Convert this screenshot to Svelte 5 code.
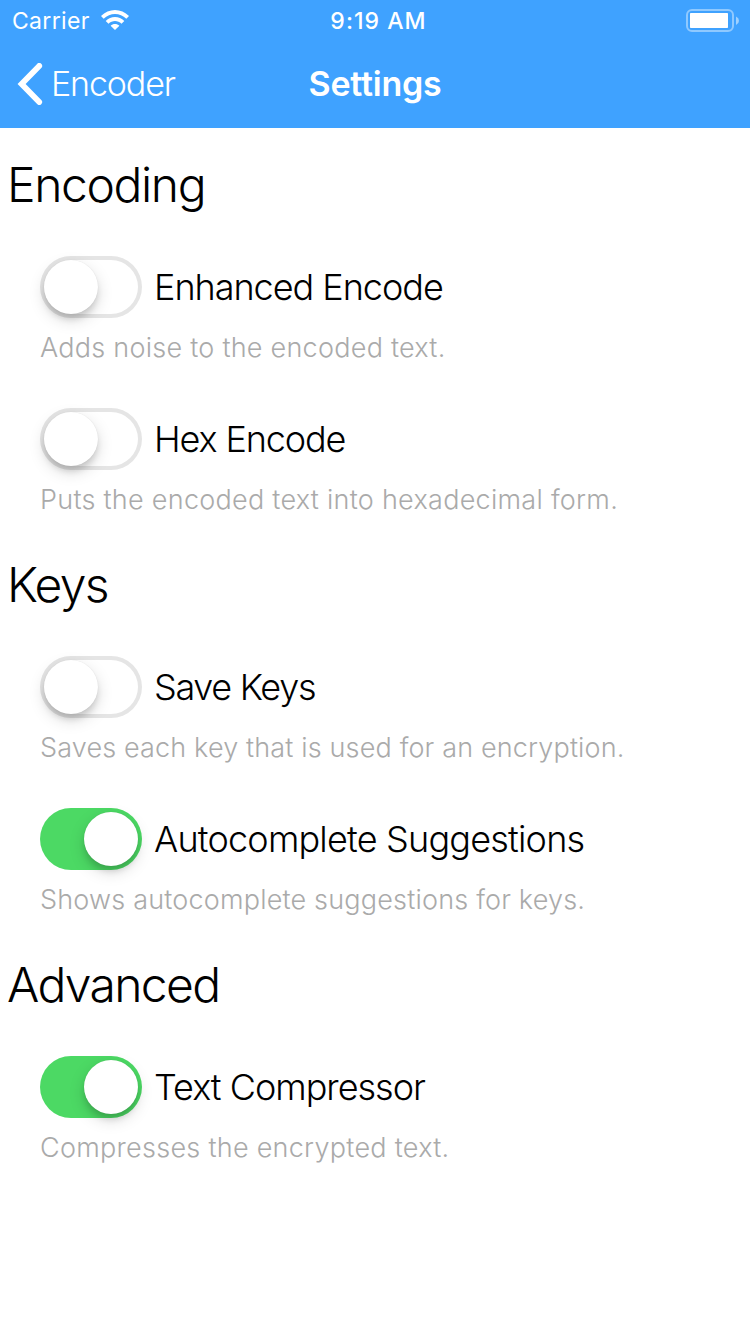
<script>
  let sections = $state([
    { title: 'Encoding', tracking: -1.4, items: [
      { label: 'Enhanced Encode', tracking: -1.03, note: 'Adds noise to the encoded text.', noteTracking: 0.25, on: false },
      { label: 'Hex Encode', tracking: -1.12, note: 'Puts the encoded text into hexadecimal form.', noteTracking: 0.27, on: false }
    ] },
    { title: 'Keys', tracking: -1.7, items: [
      { label: 'Save Keys', tracking: -1.3, note: 'Saves each key that is used for an encryption.', noteTracking: 0.15, on: false },
      { label: 'Autocomplete Suggestions', tracking: -0.8, note: 'Shows autocomplete suggestions for keys.', noteTracking: 0.19, on: true }
    ] },
    { title: 'Advanced', tracking: -1.65, items: [
      { label: 'Text Compressor', tracking: -1, note: 'Compresses the encrypted text.', noteTracking: 0.27, on: true }
    ] }
  ]);
</script>

<div class="screen">
  <header>
    <div class="status">
      <span class="carrier"><span class="name">Carrier</span>
        <svg width="28" height="20" viewBox="0 0 28 20" fill="#fff"><path d="M0 6.1C7.7-2 20.3-2 28 6.1L25.300 8.800C19.100 2.500 8.900 2.500 2.700 8.800Z"/><path d="M4.700 10.900C9.800 5.700 18.200 5.700 23.300 10.900L20.500 13.700C16.900 10.200 11.100 10.200 7.500 13.700Z"/><path d="M9.600 15.700C12 13.300 16 13.300 18.400 15.700L14 20Z"/></svg>
      </span>
      <span class="time">9:19 AM</span>
      <svg class="battery" width="53" height="24" viewBox="0 0 53 24"><rect x="1" y="1" width="46" height="21" rx="5" fill="none" stroke="#fff" stroke-opacity=".42" stroke-width="2"/><rect x="4" y="4" width="38" height="15" rx=".8" fill="#fff"/><path d="M50 7.500q3 1.500 3 4.200T50 16z" fill="#fff" opacity=".5"/></svg>
    </div>
    <nav>
      <span class="back"><svg width="26" height="42" viewBox="0 0 26 42" fill="none" stroke="#fff" stroke-width="5.8" stroke-linecap="round" stroke-linejoin="miter"><path d="M22.200 2.900 4.600 21l17.600 18.100"/></svg><span>Encoder</span></span>
      <strong>Settings</strong>
    </nav>
  </header>
  <main>
    {#each sections as s}
      <h2 style:letter-spacing="{s.tracking}px">{s.title}</h2>
      {#each s.items as item}
        <div class="item">
          <div class="row">
            <button class="switch" class:on={item.on} role="switch" aria-checked={item.on} aria-label={item.label} onclick={() => (item.on = !item.on)}><i></i></button>
            <span style:letter-spacing="{item.tracking}px">{item.label}</span>
          </div>
          <p style:letter-spacing="{item.noteTracking}px">{item.note}</p>
        </div>
      {/each}
    {/each}
  </main>
</div>

<style>
  :global(body) { background: #fff; }
  .screen { width: 750px; height: 1334px; overflow: hidden; font-family: Inter, "Liberation Sans", sans-serif; color: #000; background: #fff; }
  header { height: 128px; background: #3fa2ff; color: #fff; }
  .status { height: 42px; padding: 0 11px 0 12px; box-sizing: border-box; display: grid; grid-template-columns: 1fr auto 1fr; align-items: center; font-size: 23px; }
  .carrier { display: flex; align-items: center; gap: 11px; }
  .name { letter-spacing: .32px; }
  .carrier svg { margin-top: -2px; }
  .time { font-weight: 550; letter-spacing: 1.05px; padding-left: 6px; }
  .battery { justify-self: end; }
  nav { height: 86px; padding: 0 17px 2px; display: grid; grid-template-columns: 1fr auto 1fr; align-items: center; font-size: 34px; line-height: 40px; box-sizing: border-box; }
  .back { display: flex; align-items: center; gap: 8px; letter-spacing: -1.15px; font-weight: 350; }
  strong { font-weight: 590; letter-spacing: -.25px; }
  h2 { margin: 0; height: 96px; padding: 18px 7px 0; box-sizing: border-box; font-weight: 300; font-size: 48px; line-height: 77px; }
  .item { height: 152px; padding: 32px 40px 0; box-sizing: border-box; }
  .row { display: flex; align-items: center; gap: 12px; height: 62px; font-size: 36px; font-weight: 300; white-space: nowrap; }
  p { margin: 10px 0 0; font-size: 27px; line-height: 40px; font-weight: 300; color: #aaa; white-space: nowrap; }
  .switch { flex: none; width: 102px; height: 62px; padding: 4px; border: 0; border-radius: 31px; background: #fff; box-shadow: inset 0 0 0 4px #e5e5e5; display: flex; }
  .switch i { width: 54px; height: 54px; border-radius: 50%; background: #fff; box-shadow: 0 6px 16px rgba(0,0,0,.15), 0 6px 6px -1px rgba(0,0,0,.13), 0 0 1px rgba(0,0,0,.12); }
  .on { background: #4cd964; box-shadow: none; justify-content: flex-end; }
</style>
